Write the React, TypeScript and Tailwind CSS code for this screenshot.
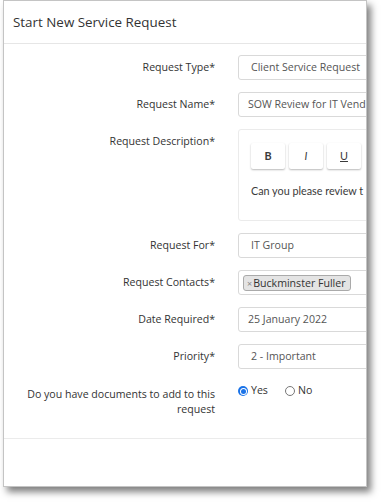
const Label = ({ children }: { children: React.ReactNode }) => (
  <div className="w-[211px] shrink-0 text-right text-[10.6px] leading-[25px] text-[#333]">
    {children}
  </div>
);

const Field = ({ value, select }: { value: string; select?: boolean }) => (
  <div
    className={`h-[25px] w-[150px] shrink-0 rounded-[3px] border border-[#d9d9d9] bg-white text-[10.6px] leading-[23px] text-[#555] whitespace-nowrap overflow-hidden ${
      select ? "pl-[12px]" : "pl-[9px]"
    }`}
  >
    {value}
  </div>
);

const Row = ({ label, children }: { label: string; children: React.ReactNode }) => (
  <div className="flex gap-[23px]">
    <Label>{label}</Label>
    {children}
  </div>
);

export default function App() {
  return (
    <div className="w-[383px] h-[503px] bg-white overflow-hidden font-['Open_Sans',sans-serif]">
      <div className="ml-[3px] w-[364px] h-[487px] border border-[#c4c4c4] bg-white shadow-[4px_5px_7px_rgba(0,0,0,0.5)] flex flex-col overflow-hidden">
        {/* header */}
        <div className="h-[43px] shrink-0 border-b border-[#e6e6e6] px-[9px] flex items-center text-[13.4px] text-[#333]">
          Start New Service Request
        </div>

        {/* body */}
        <div className="flex-1 pt-[11px] flex flex-col gap-[12px]">
          <Row label="Request Type*">
            <Field value="Client Service Request" select />
          </Row>
          <Row label="Request Name*">
            <Field value="SOW Review for IT Vend" />
          </Row>
          <Row label="Request Description*">
            <div className="h-[92px] w-[150px] shrink-0 rounded-[3px] border border-[#ebebeb] px-[12px] pt-[13px] font-['Lato',sans-serif] text-[10.8px] text-[#3a3a3a]">
              <div className="flex gap-[4px]">
                <button className="h-[26px] w-[34px] shrink-0 rounded-[2px] bg-white shadow-[0_1px_2px_rgba(0,0,0,0.28)] font-bold">
                  B
                </button>
                <button className="h-[26px] w-[34px] shrink-0 rounded-[2px] bg-white shadow-[0_1px_2px_rgba(0,0,0,0.28)] italic">
                  I
                </button>
                <button className="h-[26px] w-[34px] shrink-0 rounded-[2px] bg-white shadow-[0_1px_2px_rgba(0,0,0,0.28)] underline">
                  U
                </button>
              </div>
              <div className="mt-[15px] leading-[14px] whitespace-nowrap">
                Can you please review t
              </div>
            </div>
          </Row>
          <Row label="Request For*">
            <Field value="IT Group" select />
          </Row>
          <Row label="Request Contacts*">
            <div className="h-[25px] w-[150px] shrink-0 flex items-start rounded-[3px] border border-[#d9d9d9] bg-white pl-[4px] pt-[4px]">
              <span className="inline-flex h-[16px] items-center rounded-[3px] border border-[#aaa] bg-[#e4e4e4] pl-[3px] pr-[4px] text-[10.6px] leading-none text-[#333]">
                <span className="mr-[1px] text-[9px] text-[#888]">×</span>
                Buckminster Fuller
              </span>
            </div>
          </Row>
          <Row label="Date Required*">
            <Field value="25 January 2022" />
          </Row>
          <Row label="Priority*">
            <Field value="2 - Important" select />
          </Row>

          <div className="mt-[3px] flex gap-[23px]">
            <div className="w-[211px] shrink-0 pt-[3px] text-right text-[10.6px] leading-[15px] text-[#333]">
              Do you have documents to add to this request
            </div>
            <div className="flex items-center gap-[17px] h-[12px] mt-[1px] text-[10.6px] text-[#333]">
              <label className="flex items-center gap-[3px]">
                <span className="flex h-[10px] w-[10px] items-center justify-center rounded-full bg-[#1a73e8]">
                  <span className="flex h-[7px] w-[7px] items-center justify-center rounded-full bg-white">
                    <span className="h-[5px] w-[5px] rounded-full bg-[#1a73e8]" />
                  </span>
                </span>
                Yes
              </label>
              <label className="flex items-center gap-[3px]">
                <span className="h-[10px] w-[10px] rounded-full border border-[#777] bg-white" />
                No
              </label>
            </div>
          </div>
        </div>

        {/* footer */}
        <div className="h-[48px] shrink-0 border-t border-[#ebebeb]" />
      </div>
    </div>
  );
}
